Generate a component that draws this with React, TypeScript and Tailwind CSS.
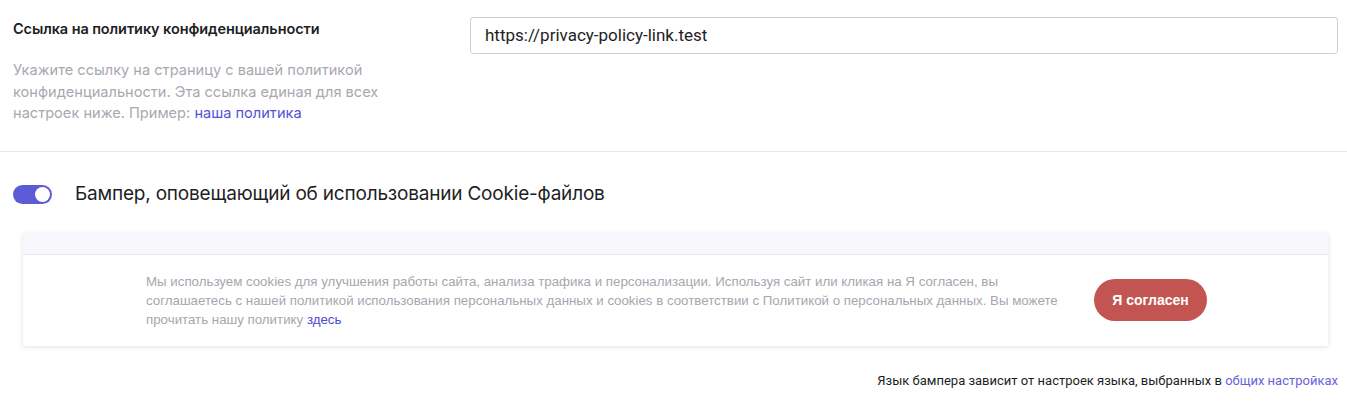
export default function App() {
  return (
    <div className="w-[1347px] h-[404px] bg-white font-['Inter',sans-serif] overflow-hidden">
      <section className="flex pl-[13px] pr-[9px] pt-[17px] pb-[26px] border-b border-[#e6e6e8]">
        <div className="w-[457px] shrink-0">
          <h3 className="text-[14.5px] leading-[24px] font-semibold text-[#1e1e24] tracking-[-0.1px]">
            Ссылка на политику конфиденциальности
          </h3>
          <p className="mt-[19px] w-[385px] text-[14.6px] leading-[21.5px] text-[#a9a8b0]">
            Укажите ссылку на страницу с вашей политикой конфиденциальности. Эта ссылка единая для всех
            настроек ниже. Пример: <a className="text-[#5452d6]">наша политика</a>
          </p>
        </div>
        <div className="flex-1">
          <div className="h-[37px] border border-[#cfcfd4] rounded-[3px] flex items-center px-[14px] font-['Roboto',sans-serif] text-[17px] text-[#1e1e24]">
            https://privacy-policy-link.test
          </div>
        </div>
      </section>

      <div className="flex items-center gap-[23px] px-[13px] pt-[30px]">
        <div className="w-[39px] h-[19px] rounded-full bg-[#5b5bd6] flex items-center justify-end pr-[2px] translate-y-[1px]">
          <div className="w-[15px] h-[15px] rounded-full bg-white" />
        </div>
        <span className="text-[19px] leading-[24px] text-[#1e1e24] tracking-[-0.2px]">
          Бампер, оповещающий об использовании Cookie-файлов
        </span>
      </div>

      <div className="ml-[23px] mr-[19px] mt-[27px] shadow-[0_1px_5px_rgba(0,0,0,0.12)]">
        <div className="h-[22px] bg-[#f7f7fc] border-b border-[#e8e8ef]" />
        <div className="flex items-center bg-white h-[91px] pl-[123px]">
          <p className="w-[935px] font-['Liberation_Sans',sans-serif] text-[13.3px] leading-[19px] text-[#a7a6ae]">
            Мы используем cookies для улучшения работы сайта, анализа трафика и персонализации. Используя сайт или кликая на Я согласен, вы
            соглашаетесь с нашей политикой использования персональных данных и cookies в соответствии с Политикой о персональных данных. Вы можете
            прочитать нашу политику <a className="text-[#4a48d2]">здесь</a>
          </p>
          <button className="ml-[13px] w-[113px] h-[42px] rounded-full bg-[#c25552] text-white font-['Liberation_Sans',sans-serif] font-bold text-[14px]">
            Я согласен
          </button>
        </div>
      </div>

      <div className="flex justify-end pr-[9px] pt-[26px] font-['Roboto',sans-serif] text-[13px] leading-[18px] text-[#1e1e24]">
        Язык бампера зависит от настроек языка, выбранных в&nbsp;<a className="text-[#6a63d8]">общих настройках</a>
      </div>
    </div>
  )
}
